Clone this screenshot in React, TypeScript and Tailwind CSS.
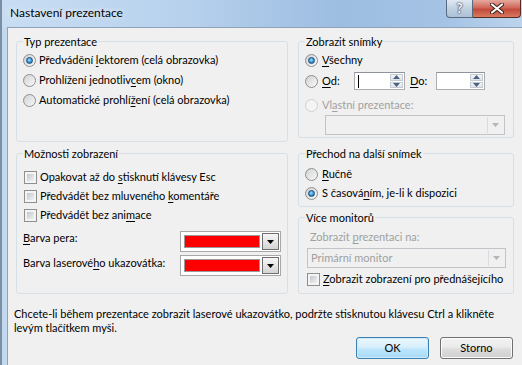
import React from "react";

type Kids = { children?: React.ReactNode };

function Radio({ checked = false, disabled = false }: { checked?: boolean; disabled?: boolean }) {
  return (
    <span
      className={`inline-flex w-[13px] h-[13px] shrink-0 items-center justify-center rounded-full border ${
        disabled
          ? "border-[#cfcfcf] bg-[#f4f4f4]"
          : "border-[#8e8f8f] bg-[linear-gradient(135deg,#cfd1d4,#f9f9f9)]"
      }`}
    >
      {checked && (
        <span className="w-[7px] h-[7px] rounded-full border border-[#1b4f7e] bg-[radial-gradient(circle_at_45%_40%,#9fe3ff,#2b8bd0_60%,#174f86)]" />
      )}
    </span>
  );
}

function Checkbox() {
  return (
    <span className="inline-flex w-[13px] h-[13px] shrink-0 border border-[#8e8f8f] bg-[#f4f4f4] p-[2px]">
      <span className="block w-full h-full bg-[linear-gradient(135deg,#c3c7cc,#f1f2f3)]" />
    </span>
  );
}

function U({ children }: Kids) {
  return <span className="underline underline-offset-[2px] decoration-1">{children}</span>;
}

function Group({ title, className = "", children }: Kids & { title: string; className?: string }) {
  return (
    <fieldset className={`border border-[#d5dfe5] rounded-[3px] ${className}`}>
      <legend className="ml-[6px] px-[1px] leading-[15px]">{title}</legend>
      {children}
    </fieldset>
  );
}

function SpinArrow({ up }: { up?: boolean }) {
  return (
    <svg width="7" height="4" viewBox="0 0 7 4">
      <polygon points={up ? "0,4 7,4 3.5,0" : "0,0 7,0 3.5,4"} fill="#4d6185" />
    </svg>
  );
}

function Spinbox({ w, cursor }: { w: string; cursor?: boolean }) {
  return (
    <div className={`flex h-[18px] ${w} border border-[#abadb3] border-t-[#8f949a] bg-white`}>
      <div className="flex-1 flex items-center pl-[3px]">
        {cursor && <span className="w-px h-[13px] bg-black" />}
      </div>
      <div className="w-[15px] flex flex-col gap-px p-px">
        <div className="flex-1 flex items-center justify-center border border-[#c5cbd3] bg-[linear-gradient(#f5f5f5,#dfe3e8)]">
          <SpinArrow up />
        </div>
        <div className="flex-1 flex items-center justify-center border border-[#c5cbd3] bg-[linear-gradient(#f5f5f5,#dfe3e8)]">
          <SpinArrow />
        </div>
      </div>
    </div>
  );
}

function DisabledCombo({ w, text }: { w: string; text?: string }) {
  return (
    <div className={`flex items-center h-[20px] ${w} border border-[#c1c5c9] bg-[#f0f0f0] text-[#a0a0a0]`}>
      <span className="pl-[3px]">{text}</span>
      <div className="ml-auto mr-px w-[16px] h-[16px] flex items-center justify-center border-l border-[#d9dcdf]">
        <svg width="7" height="4" viewBox="0 0 7 4">
          <polygon points="0,0 7,0 3.5,4" fill="#b5b5b5" />
        </svg>
      </div>
    </div>
  );
}

function ColorCombo() {
  return (
    <div className="flex items-center w-[101px] h-[21px] border border-[#a8a8a8] bg-white pl-[3px] pr-px">
      <div className="w-[76px] h-[13px] border border-[#9a9a9a] bg-[#ff0000]" />
      <div className="ml-auto w-[17px] h-[17px] flex items-center justify-center border border-[#6f6f6f] bg-[linear-gradient(#f6f6f6,#d4d4d4)]">
        <svg width="7" height="4" viewBox="0 0 7 4">
          <polygon points="0,0 7,0 3.5,4" fill="#000" />
        </svg>
      </div>
    </div>
  );
}

export default function App() {
  return (
    <div className="w-[522px] h-[365px] overflow-hidden flex flex-col border-l-2 border-[#7b8ea4] bg-[#c3d9ef] text-[11px] text-black font-['Lato',sans-serif] whitespace-nowrap">
      {/* title bar */}
      <div className="h-[27px] shrink-0 flex items-start pr-px bg-[linear-gradient(90deg,#c8ddf3_0%,#b7d1ed_35%,#9dbde1_65%,#a4c3e5_85%,#bcd4ed_100%)]">
        <div className="pl-[8px] pt-[5px] text-[12px] leading-[15px] [text-shadow:0_0_6px_#ffffff]">
          Nastavení prezentace
        </div>
        <div className="ml-auto flex h-[18px]">
          <div className="w-[27px] h-full flex items-center justify-center border border-t-0 border-[#566a80] rounded-bl-[4px] bg-[linear-gradient(#dfe8f2,#c2d1e1_50%,#adc0d5)] text-white font-bold text-[13px] leading-none [text-shadow:0_0_1px_#223,0_0_2px_#223]">
            ?
          </div>
          <div className="w-[48px] h-full flex items-center justify-center border border-t-0 border-l-0 border-[#5b2a22] rounded-br-[4px] bg-[linear-gradient(#e5a99f,#d1685a_45%,#c24a3b_55%,#d87a5f)]">
            <svg width="14" height="11" viewBox="0 0 14 11">
              <path d="M2 1.5 L12 9.5 M12 1.5 L2 9.5" stroke="#3a1e1a" strokeWidth="4" strokeLinecap="round" />
              <path d="M2 1.5 L12 9.5 M12 1.5 L2 9.5" stroke="#ffffff" strokeWidth="2.2" strokeLinecap="round" />
            </svg>
          </div>
        </div>
      </div>

      <div className="flex-1 flex min-h-0">
        <div className="w-[5px] shrink-0" />
        <div className="flex-1 flex flex-col bg-[#f0f0f0] border-l border-t border-[#8ea3b9]">
          <div className="flex gap-[10px] pl-[8px] pt-[6px]">
            {/* left column */}
            <div className="w-[272px] flex flex-col gap-[4px]">
              <Group title="Typ prezentace" className="h-[108px]">
                <div className="flex flex-col pl-[6px] pt-px">
                  <div className="h-[20px] flex items-center gap-[3px]">
                    <Radio checked />
                    <span>Předvádění <U>l</U>ektorem (celá obrazovka)</span>
                  </div>
                  <div className="h-[20px] flex items-center gap-[3px]">
                    <Radio />
                    <span>Prohlížení jednotliv<U>c</U>em (okno)</span>
                  </div>
                  <div className="h-[20px] flex items-center gap-[3px]">
                    <Radio />
                    <span>Automatické prohlí<U>ž</U>ení (celá obrazovka)</span>
                  </div>
                </div>
              </Group>

              <Group title="Možnosti zobrazení" className="h-[148px]">
                <div className="flex flex-col pl-[7px] pr-[6px] pt-[7px]">
                  <div className="h-[19px] flex items-center gap-[3px]">
                    <Checkbox />
                    <span>Opakovat až do <U>s</U>tisknutí klávesy Esc</span>
                  </div>
                  <div className="h-[19px] flex items-center gap-[3px]">
                    <Checkbox />
                    <span>Předvádět bez mluveného <U>k</U>omentáře</span>
                  </div>
                  <div className="h-[19px] flex items-center gap-[3px]">
                    <Checkbox />
                    <span>Předvádět bez ani<U>m</U>ace</span>
                  </div>
                  <div className="mt-[6px] flex items-start justify-between">
                    <span className="-ml-px leading-[14px]">
                      <U>B</U>arva pera:
                    </span>
                    <ColorCombo />
                  </div>
                  <div className="mt-[3px] flex items-start justify-between">
                    <span className="-ml-px pt-px leading-[14px]">
                      Barva laserové<U>h</U>o ukazovátka:
                    </span>
                    <ColorCombo />
                  </div>
                </div>
              </Group>
            </div>

            {/* right column */}
            <div className="w-[216px] flex flex-col">
              <Group title="Zobrazit snímky" className="h-[104px]">
                <div className="flex flex-col pl-[6px] pt-px">
                  <div className="h-[20px] flex items-center gap-[4px]">
                    <Radio checked />
                    <span>
                      <U>V</U>šechny
                    </span>
                  </div>
                  <div className="mt-px h-[20px] flex items-center">
                    <Radio />
                    <span className="ml-[4px] w-[32px]">
                      <U>O</U>d:
                    </span>
                    <Spinbox w="w-[51px]" cursor />
                    <span className="ml-[5px] w-[26px]">
                      <U>D</U>o:
                    </span>
                    <Spinbox w="w-[49px]" />
                  </div>
                  <div className="mt-[6px] h-[16px] flex items-center gap-[4px] text-[#a0a0a0]">
                    <Radio disabled />
                    <span>
                      Vl<U>a</U>stní prezentace:
                    </span>
                  </div>
                  <div className="mt-[2px] pl-[20px]">
                    <DisabledCombo w="w-[180px]" />
                  </div>
                </div>
              </Group>

              <Group title="Přechod na další snímek" className="mt-[8px] h-[61px]">
                <div className="flex flex-col pl-[6px] pt-[4px]">
                  <div className="h-[19px] flex items-center gap-[4px]">
                    <Radio />
                    <span>
                      <U>R</U>učně
                    </span>
                  </div>
                  <div className="h-[19px] flex items-center gap-[4px]">
                    <Radio checked />
                    <span>
                      S časová<U>n</U>ím, je-li k dispozici
                    </span>
                  </div>
                </div>
              </Group>

              <Group title="Více monitorů" className="mt-[3px] h-[84px]">
                <div className="flex flex-col pl-[8px] pt-[5px]">
                  <span className="ml-[3px] leading-[14px] text-[#a0a0a0]">
                    Zobrazit <U>p</U>rezentaci na:
                  </span>
                  <div className="mt-[4px]">
                    <DisabledCombo w="w-[199px]" text="Primární monitor" />
                  </div>
                  <div className="mt-[3px] h-[16px] flex items-center gap-[3px]">
                    <Checkbox />
                    <span>
                      <U>Z</U>obrazit zobrazení pro přednášejícího
                    </span>
                  </div>
                </div>
              </Group>
            </div>
          </div>

          <p className="mt-[13px] pl-[6px] leading-[14px]">
            Chcete-li během prezentace zobrazit laserové ukazovátko, podržte stisknutou klávesu Ctrl a klikněte
            <br />
            levým tlačítkem myši.
          </p>

          <div className="mt-[2px] pr-[9px] flex justify-end gap-[11px]">
            <button className="w-[73px] h-[22px] rounded-[3px] border border-[#3c7fb1] bg-[linear-gradient(#eaf6fd_0%,#d9f0fc_45%,#bee6fd_55%,#a7d9f5_100%)] shadow-[inset_0_0_0_1px_#cfeaf9]">
              OK
            </button>
            <button className="w-[73px] h-[22px] rounded-[3px] border border-[#707070] bg-[linear-gradient(#f2f2f2_0%,#ebebeb_45%,#dddddd_55%,#cfcfcf_100%)] shadow-[inset_0_0_0_1px_#fcfcfc]">
              Storno
            </button>
          </div>
        </div>
      </div>
    </div>
  );
}
